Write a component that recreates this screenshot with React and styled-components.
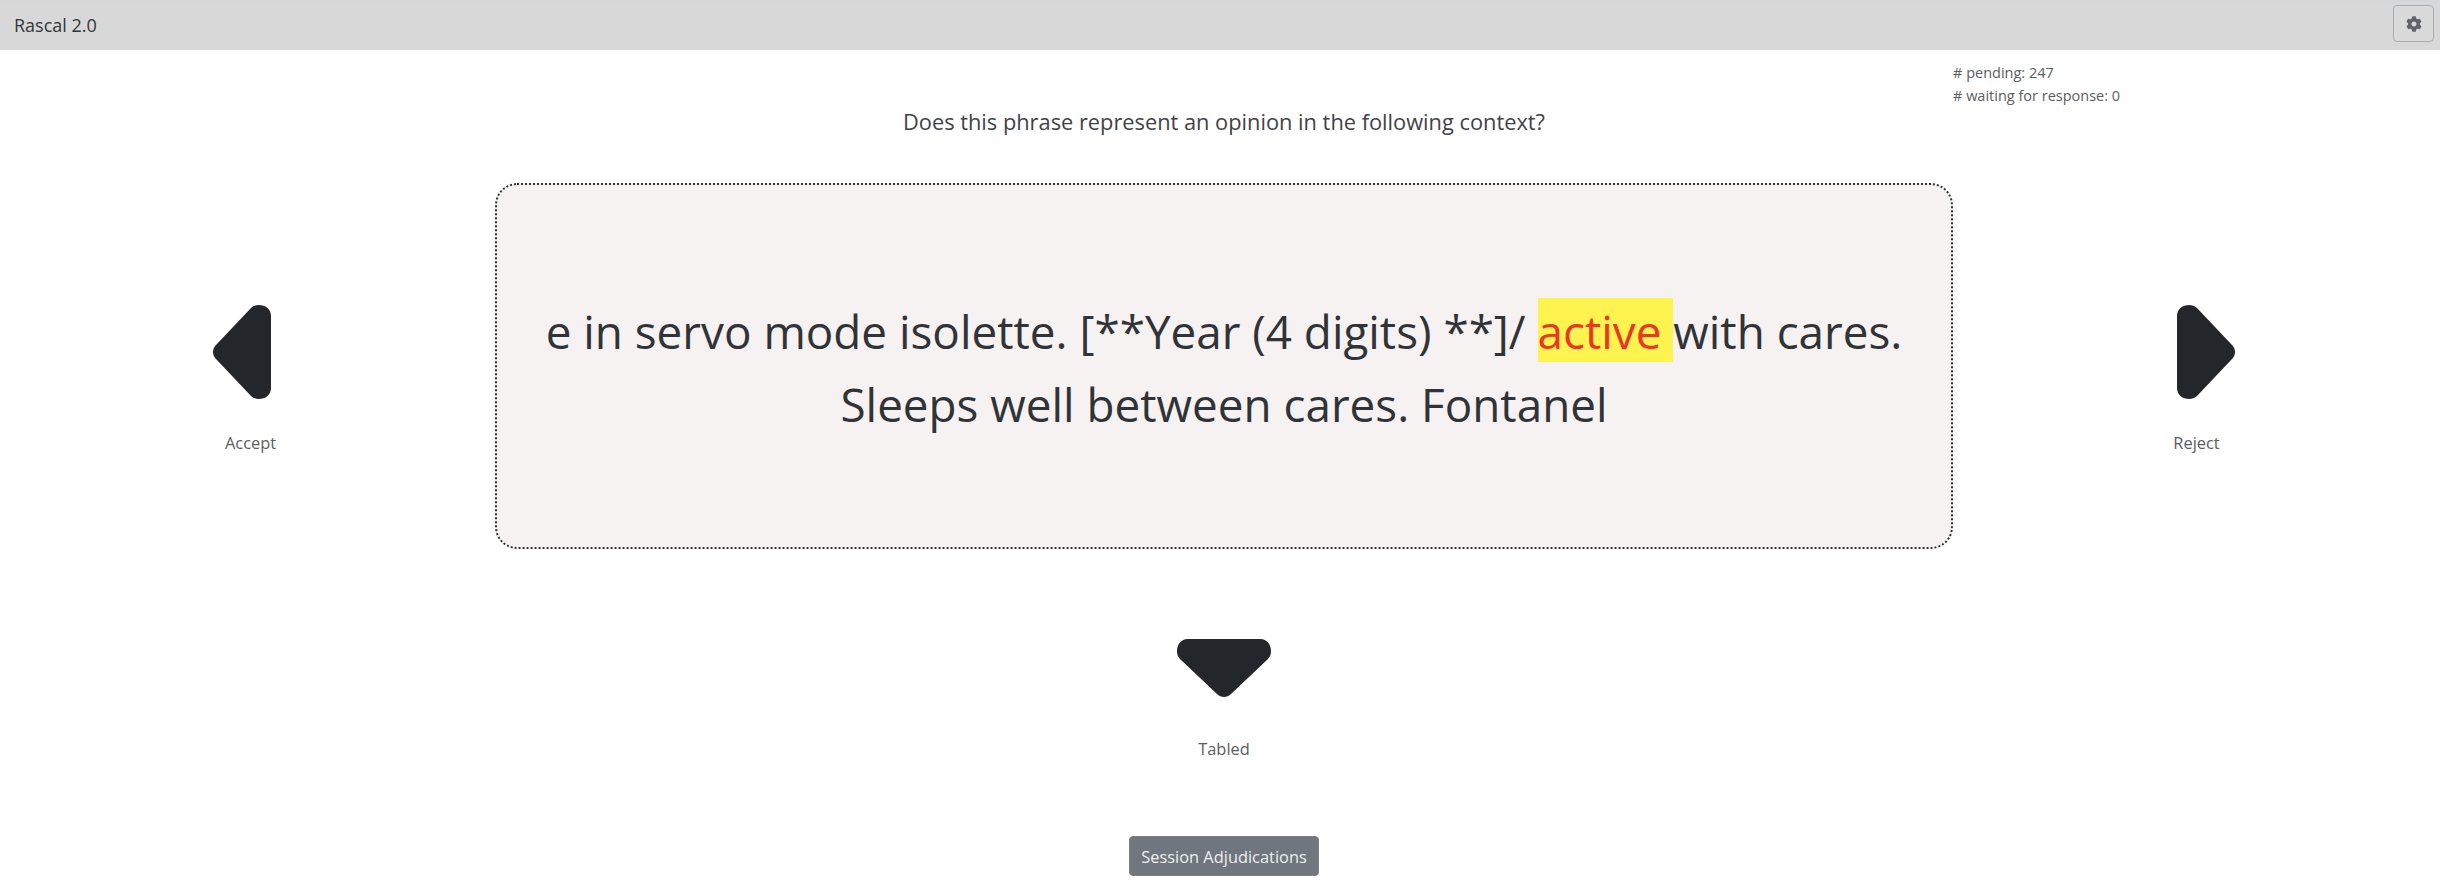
import React from "react";
import styled, { createGlobalStyle } from "styled-components";

const GlobalStyle = createGlobalStyle`
  html, body { margin: 0; padding: 0; background: #fff; }
  body { font-family: "Open Sans", "Noto Sans", sans-serif; color: #212529; }
`;

const Page = styled.div`
  width: 2440px;
  height: 894px;
  overflow: hidden;
  display: flex;
  flex-direction: column;
`;

const Header = styled.header`
  height: 50px;
  flex: none;
  box-sizing: border-box;
  background: #d8d8d8;
  border-top: 2px solid #d3d7da;
  padding: 3px 6px 0 14px;
  display: flex;
  align-items: flex-start;
  justify-content: space-between;
`;

const Brand = styled.div`
  font-size: 18px;
  line-height: 40px;
  color: #33373a;
`;

const SettingsButton = styled.button`
  width: 41px;
  height: 37px;
  padding: 0;
  display: flex;
  align-items: center;
  justify-content: center;
  background: #dadada;
  border: 1px solid #a9adb0;
  border-radius: 4px;
  color: #5e6468;
`;

const Board = styled.main`
  display: grid;
  grid-template-columns: 495px 1458px 487px;
  grid-template-rows: 133px 366px 287px auto;
`;

const Question = styled.div`
  grid-column: 2;
  grid-row: 1;
  font-size: 21.8px;
  line-height: 32px;
  text-align: center;
  padding-top: 56px;
  color: #3f4347;
`;

const Stats = styled.div`
  grid-column: 3;
  grid-row: 1;
  padding-top: 11px;
  font-size: 14.5px;
  line-height: 23px;
  color: #5a5e62;
  white-space: nowrap;
`;

const Action = styled.div`
  display: flex;
  flex-direction: column;
  align-items: center;
  color: #5a5e62;
  font-size: 16.4px;
  line-height: 24px;
`;

const SideAction = styled(Action)`
  grid-row: 2;
  grid-column: ${(p) => p.$col};
  padding-top: 121px;
  padding-left: ${(p) => (p.$col === 1 ? "6px" : "0")};
  gap: 31px;
`;

const DownAction = styled(Action)`
  grid-row: 3;
  grid-column: 2;
  padding-top: 90px;
  gap: 40px;
`;

const Card = styled.section`
  grid-row: 2;
  grid-column: 2;
  box-sizing: border-box;
  background: #f5f2f1;
  border: 2px dotted #303336;
  border-radius: 22px;
  display: flex;
  align-items: center;
  justify-content: center;
  text-align: center;
  font-size: 45.8px;
  line-height: 73px;
  color: #303337;
  padding: 4px 40px 0;
`;

const Highlight = styled.span`
  background: #fff44f;
  color: #ee3524;
  padding-top: 2px;
`;

const Footer = styled.div`
  grid-row: 4;
  grid-column: 2;
  display: flex;
  justify-content: center;
`;

const SessionButton = styled.button`
  width: 190px;
  height: 40px;
  padding: 0;
  font-family: inherit;
  font-size: 16.4px;
  color: #eceef0;
  background: #6f767e;
  border: 1px solid #7b828a;
  border-radius: 4px;
`;

const TRI =
  "M3 41 L38 4 C44 -2 58 1 58 12 V84 C58 95 44 98 38 92 L3 55 C-1 51 -1 45 3 41 Z";

function LeftArrow() {
  return (
    <svg width="76" height="96" viewBox="0 0 76 96" fill="#23262a">
      <path d={TRI} />
    </svg>
  );
}
function RightArrow() {
  return (
    <svg width="76" height="96" viewBox="0 0 76 96" fill="#23262a">
      <path d={TRI} transform="translate(76 0) scale(-1 1)" />
    </svg>
  );
}
function DownArrow() {
  return (
    <svg width="96" height="58" viewBox="0 0 96 58" fill="#23262a">
      <path d={TRI} transform="translate(0 58) rotate(-90)" />
    </svg>
  );
}
function Gear() {
  return (
    <svg width="16" height="16" viewBox="0 0 512 512" fill="currentColor">
      <path d="M487.4 315.7l-42.6-24.6c4.3-23.2 4.3-47 0-70.2l42.6-24.6c4.9-2.8 7.1-8.6 5.5-14-11.1-35.6-30-67.8-54.7-94.6-3.8-4.1-10-5.1-14.8-2.3L380.8 110c-17.9-15.4-38.5-27.3-60.8-35.1V25.8c0-5.6-3.9-10.5-9.4-11.7-36.7-8.2-74.3-7.8-109.2 0-5.5 1.2-9.4 6.1-9.4 11.7V75c-22.2 7.9-42.8 19.8-60.8 35.1L88.7 85.5c-4.9-2.8-11-1.9-14.8 2.3-24.7 26.7-43.6 58.9-54.7 94.6-1.7 5.4.6 11.2 5.5 14L67.3 221c-4.3 23.2-4.3 47 0 70.2l-42.6 24.6c-4.9 2.8-7.1 8.6-5.5 14 11.1 35.6 30 67.8 54.7 94.6 3.8 4.1 10 5.1 14.8 2.3l42.6-24.6c17.9 15.4 38.5 27.3 60.8 35.1v49.2c0 5.6 3.9 10.5 9.4 11.7 36.7 8.2 74.3 7.8 109.2 0 5.5-1.2 9.4-6.1 9.4-11.7v-49.2c22.2-7.9 42.8-19.8 60.8-35.1l42.6 24.6c4.9 2.8 11 1.9 14.8-2.3 24.7-26.7 43.6-58.9 54.7-94.6 1.5-5.5-.7-11.3-5.6-14.1zM256 336c-44.1 0-80-35.9-80-80s35.9-80 80-80 80 35.9 80 80-35.9 80-80 80z" />
    </svg>
  );
}

export default function App() {
  return (
    <Page>
      <GlobalStyle />
      <Header>
        <Brand>Rascal 2.0</Brand>
        <SettingsButton aria-label="Settings">
          <Gear />
        </SettingsButton>
      </Header>
      <Board>
        <Question>Does this phrase represent an opinion in the following context?</Question>
        <Stats>
          <div># pending: 247</div>
          <div># waiting for response: 0</div>
        </Stats>
        <SideAction $col={1}>
          <LeftArrow />
          <span>Accept</span>
        </SideAction>
        <Card>
          <div>
            e in servo mode isolette. [**Year (4 digits) **]/ <Highlight>active </Highlight>with cares.
            <br />
            Sleeps well between cares. Fontanel
          </div>
        </Card>
        <SideAction $col={3}>
          <RightArrow />
          <span>Reject</span>
        </SideAction>
        <DownAction>
          <DownArrow />
          <span>Tabled</span>
        </DownAction>
        <Footer>
          <SessionButton>Session Adjudications</SessionButton>
        </Footer>
      </Board>
    </Page>
  );
}
